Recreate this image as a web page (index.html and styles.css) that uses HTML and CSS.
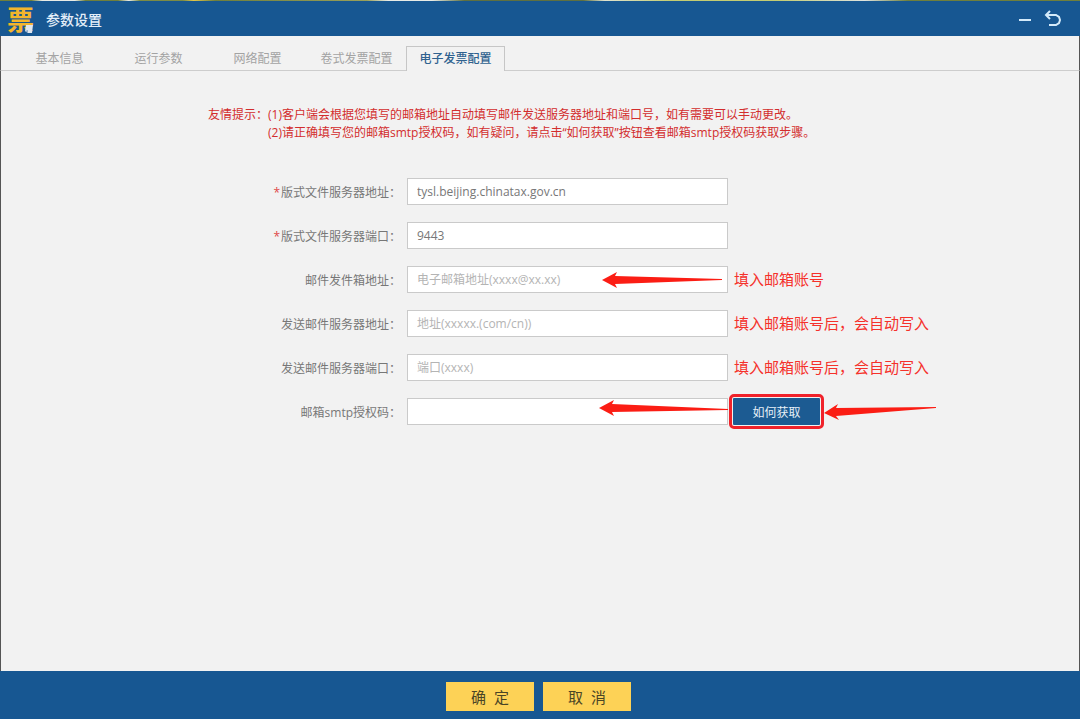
FILE: index.html
```html
<!DOCTYPE html>
<html lang="zh-CN">
<head>
    <meta charset="UTF-8">
    <meta name="viewport" content="width=device-width, initial-scale=1.0">
    <title>参数设置</title>
    <link rel="stylesheet" href="styles.css">
</head>
<body>
    <header class="title-bar">
        <span class="logo">票
            <svg class="logo-page" width="9" height="9" viewBox="0 0 9 9" aria-hidden="true">
                <path d="M1 0h7l-1 8H3L0 6z" fill="#dfe6ee"/>
                <path d="M0 6l3 2V5z" fill="#8fa9c6"/>
            </svg>
        </span>
        <h1>参数设置</h1>
        <div class="window-buttons">
            <button type="button" aria-label="最小化">
                <svg width="14" height="18" viewBox="0 0 14 18"><path d="M1 10h12" stroke="#d3eafa" stroke-width="2" fill="none"/></svg>
            </button>
            <button type="button" aria-label="返回">
                <svg width="18" height="18" viewBox="0 0 18 18" fill="none" stroke="#d3eafa" stroke-width="2">
                    <path d="M2 5h10l3 2 1 3-1 3-3 2H5"/>
                    <path d="M6 1L2 5l4 4"/>
                </svg>
            </button>
        </div>
    </header>

    <nav class="tabs">
        <a href="#">基本信息</a>
        <a href="#">运行参数</a>
        <a href="#">网络配置</a>
        <a href="#">卷式发票配置</a>
        <a href="#" class="active">电子发票配置</a>
    </nav>

    <main class="content">
        <form class="config-form" id="configForm">
            <div class="tips">
                <span>友情提示：</span>
                <div>
                    <p>(1)客户端会根据您填写的邮箱地址自动填写邮件发送服务器地址和端口号，如有需要可以手动更改。</p>
                    <p>(2)请正确填写您的邮箱smtp授权码，如有疑问，请点击“如何获取”按钮查看邮箱smtp授权码获取步骤。</p>
                </div>
            </div>

            <div class="form-row">
                <label for="fileServer"><span class="required">*</span>版式文件服务器地址：</label>
                <div class="field"><input type="text" id="fileServer" value="tysl.beijing.chinatax.gov.cn"></div>
            </div>
            <div class="form-row">
                <label for="filePort"><span class="required">*</span>版式文件服务器端口：</label>
                <div class="field"><input type="text" id="filePort" value="9443"></div>
            </div>
            <div class="form-row">
                <label for="mailAddress">邮件发件箱地址：</label>
                <div class="field">
                    <input type="text" id="mailAddress" placeholder="电子邮箱地址(xxxx@xx.xx)">
                    <svg class="arrow arrow-mail" width="120" height="18" viewBox="0 0 120 18" aria-hidden="true">
                        <path d="M0 9L15 1l-2 4L120 8v1L13 13l2 4z" fill="#fb1d14"/>
                    </svg>
                </div>
                <span class="note">填入邮箱账号</span>
            </div>
            <div class="form-row">
                <label for="mailServer">发送邮件服务器地址：</label>
                <div class="field"><input type="text" id="mailServer" placeholder="地址(xxxxx.(com/cn))"></div>
                <span class="note">填入邮箱账号后，会自动写入</span>
            </div>
            <div class="form-row">
                <label for="mailPort">发送邮件服务器端口：</label>
                <div class="field"><input type="text" id="mailPort" placeholder="端口(xxxx)"></div>
                <span class="note">填入邮箱账号后，会自动写入</span>
            </div>
            <div class="form-row">
                <label for="smtpCode">邮箱smtp授权码：</label>
                <div class="field">
                    <input type="text" id="smtpCode">
                    <svg class="arrow arrow-code" width="129" height="18" viewBox="0 0 129 18" aria-hidden="true">
                        <path d="M0 8L15 0l-2 4L129 9v1L13 12l2 4z" fill="#fb1d14"/>
                    </svg>
                </div>
                <div class="help">
                    <button type="button" class="help-btn">如何获取</button>
                    <svg width="113" height="18" viewBox="0 0 113 18" aria-hidden="true">
                        <path d="M0 10L14 1l-2 4L112 4v1L12 13l3 4z" fill="#fb1d14"/>
                    </svg>
                </div>
            </div>
        </form>
    </main>

    <footer class="footer">
        <button type="submit" form="configForm">确&nbsp; 定</button>
        <button type="button">取&nbsp; 消</button>
    </footer>
</body>
</html>
```

FILE: styles.css
```css
* {
    margin: 0;
    padding: 0;
    box-sizing: border-box;
}

body {
    font-family: "Open Sans", "Noto Sans CJK SC", sans-serif;
    font-size: 12px;
    background-color: #f2f2f2;
    color: #777;
    display: flex;
    flex-direction: column;
    min-height: 100vh;
}

button,
input {
    font-family: inherit;
    font-size: 12px;
}

.title-bar {
    display: flex;
    align-items: center;
    height: 36px;
    padding: 0 18px 0 7px;
    background-color: #175792;
    border-top: 1px solid;
    border-image: linear-gradient(to right, #6f7f3c 3%, #e8ebe6 4%, #e8ebe6 7%, #6f7f3c 8%, #6f7f3c 11%, #e8ebe6 12%, #7c8b45 13%, #7c8b45 17%, #e2c64a 18%, #6f7f3c 20%, #9aa05a 34%, #e8ebe6 36%, #e8ebe6 40%, #5f7040 43%, #5f7040 54%, #e0e3cf 56%, #c4cc72 62%, #c4cc72 72%, #dfe3df 80%, #6f7f3c 84%, #6f7f3c) 1;
}

.logo {
    position: relative;
    width: 28px;
    height: 30px;
    line-height: 32px;
    font-size: 27px;
    font-weight: bold;
    color: #f3b52c;
}

.logo-page {
    position: absolute;
    right: 1px;
    bottom: 0;
}

.title-bar h1 {
    margin-left: 11px;
    font-size: 14px;
    font-weight: 500;
    color: #e3eef8;
}

.window-buttons {
    display: flex;
    gap: 12px;
    margin-left: auto;
}

.window-buttons button {
    display: flex;
    border: none;
    background: none;
    cursor: pointer;
}

.tabs {
    display: flex;
    align-items: flex-end;
    height: 35px;
    padding-left: 9px;
    border: 1px solid #555;
    border-top: none;
    border-bottom-color: #cdcdcd;
}

.tabs a {
    width: 99px;
    height: 24px;
    line-height: 26px;
    text-align: center;
    color: #a3a3a3;
    text-decoration: none;
}

.tabs .active {
    margin-bottom: -1px;
    height: 25px;
    line-height: 24px;
    border: 1px solid #c6c6c6;
    border-bottom: none;
    background-color: #f2f2f2;
    color: #30628f;
    font-weight: 500;
}

.content {
    flex: 1;
    padding-top: 35px;
    border: solid #555;
    border-width: 0 1px;
}

.config-form {
    max-width: 790px;
    margin: 0 auto;
}

.tips {
    display: flex;
    margin: 0 0 36px 63px;
    line-height: 18px;
    color: #d22d2d;
    white-space: nowrap;
}

.form-row {
    display: flex;
    align-items: center;
    margin-bottom: 17px;
    white-space: nowrap;
}

.form-row > * {
    flex-shrink: 0;
}

.form-row label {
    width: 256px;
    margin-right: 6px;
    text-align: right;
}

.required {
    margin-right: 1px;
    color: #e04848;
}

.field {
    position: relative;
    width: 321px;
}

.field input {
    display: block;
    width: 100%;
    height: 27px;
    padding: 0 9px;
    border: 1px solid #cacaca;
    background-color: #fff;
    color: #777;
    outline: none;
}

.field input::placeholder {
    color: #b4b4b4;
}

/* arrows drawn over the inputs */
.arrow {
    position: absolute;
    pointer-events: none;
}

.arrow-mail {
    top: 5px;
    right: 6px;
}

.arrow-code {
    top: 2px;
    right: 0;
}

.note {
    margin-left: 6px;
    line-height: 27px;
    font-size: 15px;
    color: #f5312b;
}

.help {
    display: flex;
    align-items: center;
    gap: 4px;
    margin-left: 5px;
}

.help-btn {
    width: 87px;
    height: 27px;
    border: none;
    outline: 3px solid #f0222a;
    outline-offset: 1px;
    border-radius: 1px;
    background-color: #1c5b92;
    color: #e6eff7;
    cursor: pointer;
}

.footer {
    display: flex;
    justify-content: center;
    align-items: center;
    gap: 9px;
    height: 48px;
    padding: 3px 3px 0 0;
    background-color: #175792;
}

.footer button {
    width: 88px;
    height: 29px;
    border: none;
    background-color: #fdd256;
    font-size: 15px;
    color: #4a4526;
    cursor: pointer;
}
```
